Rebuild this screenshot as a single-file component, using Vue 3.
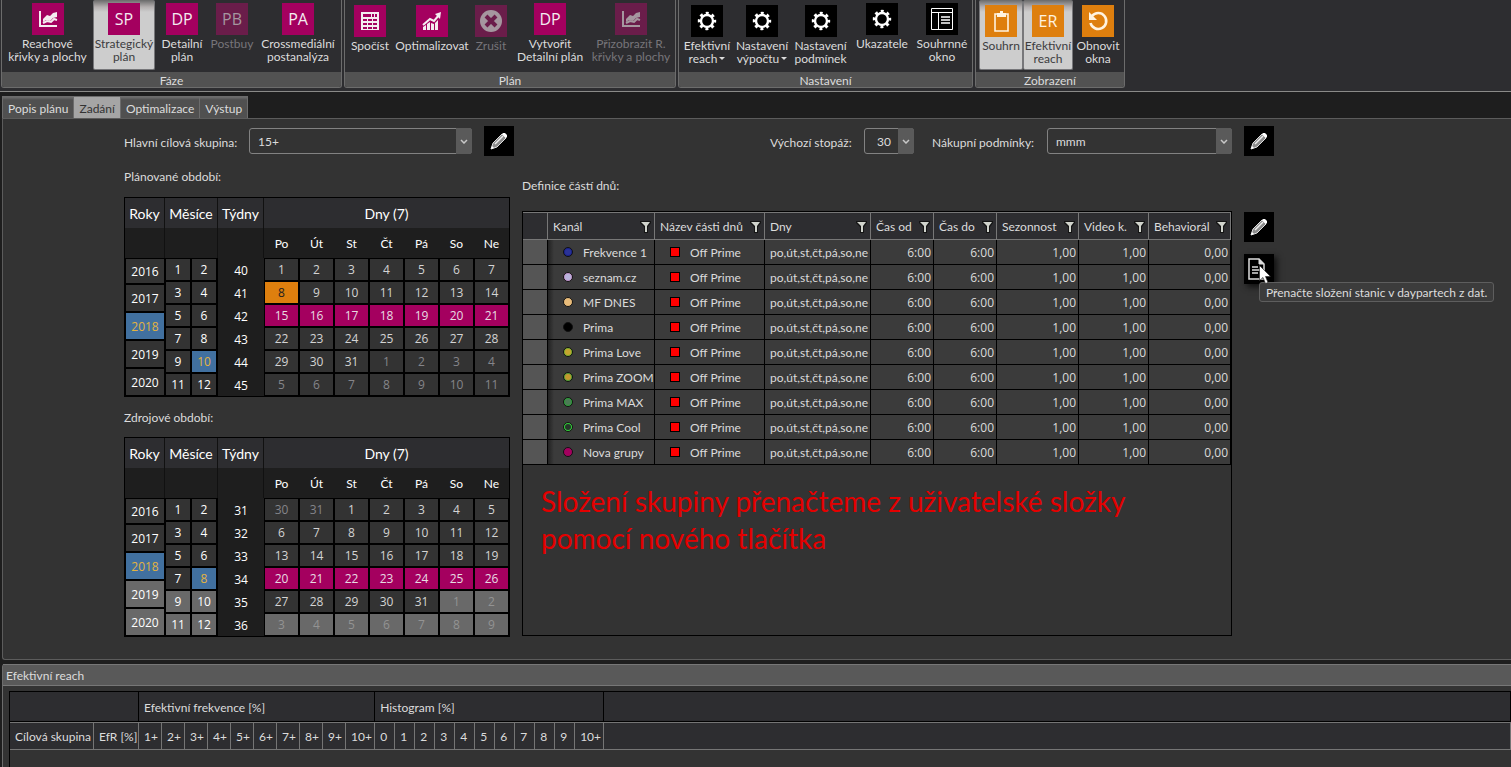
<script setup>
import { ref } from 'vue'

const groups = [
  {
    name: 'Fáze', key: 'faze',
    items: [
      { icon: 'chart', lines: ['Reachové', 'křivky a plochy'] },
      { glyph: 'SP', lines: ['Strategický', 'plán'], active: true },
      { glyph: 'DP', lines: ['Detailní', 'plán'] },
      { glyph: 'PB', lines: ['Postbuy'], disabled: true },
      { glyph: 'PA', lines: ['Crossmediální', 'postanalýza'] }
    ]
  },
  {
    name: 'Plán', key: 'plan',
    items: [
      { icon: 'calc', lines: ['Spočíst'], low: true },
      { icon: 'growth', lines: ['Optimalizovat'], low: true },
      { icon: 'cancel', lines: ['Zrušit'], low: true, disabled: true },
      { glyph: 'DP', lines: ['Vytvořit', 'Detailní plán'] },
      { icon: 'chart', lines: ['Přizobrazit R.', 'křivky a plochy'], disabled: true }
    ]
  },
  {
    name: 'Nastavení', key: 'nastaveni', tone: 'black',
    items: [
      { icon: 'gear', lines: ['Efektivní', 'reach'], low: true, menu: true },
      { icon: 'gear', lines: ['Nastavení', 'výpočtu'], low: true, menu: true },
      { icon: 'gear', lines: ['Nastavení', 'podmínek'], low: true },
      { icon: 'gear', lines: ['Ukazatele'] },
      { icon: 'window', lines: ['Souhrnné', 'okno'] }
    ]
  },
  {
    name: 'Zobrazení', key: 'zobrazeni', tone: 'orange',
    items: [
      { icon: 'clipboard', lines: ['Souhrn'], low: true, active: true },
      { glyph: 'ER', lines: ['Efektivní', 'reach'], low: true, active: true },
      { icon: 'reload', lines: ['Obnovit', 'okna'], low: true }
    ]
  }
]

const tabs = ['Popis plánu', 'Zadání', 'Optimalizace', 'Výstup']
const activeTab = ref('Zadání')

const weekdays = ['Po', 'Út', 'St', 'Čt', 'Pá', 'So', 'Ne']
const years = [2016, 2017, 2018, 2019, 2020]

function days(first, prevLast, length) {
  const out = []
  for (let i = 0; i < 42; i++) {
    const n = first + i
    if (n < 1) out.push({ n: prevLast + n, other: true })
    else if (n > length) out.push({ n: n - length, other: true })
    else out.push({ n, other: false })
  }
  return out
}

const calendars = [
  {
    title: 'Plánované období:', month: 10, weekStart: 40, lastYear: 2020, lastMonth: 12, lastDay: 42,
    days: days(1, 30, 31), today: 7, selected: [14, 20]
  },
  {
    title: 'Zdrojové období:', month: 8, weekStart: 31, lastYear: 2018, lastMonth: 8, lastDay: 33,
    days: days(-1, 31, 31), today: -1, selected: [21, 27]
  }
]

const columns = [
  { t: 'Kanál', k: 'kanal' }, { t: 'Název části dnů', k: 'nazev' }, { t: 'Dny', k: 'dny' },
  { t: 'Čas od', k: 'cas' }, { t: 'Čas do', k: 'cas' }, { t: 'Sezonnost', k: 'sezon' },
  { t: 'Video k.', k: 'video' }, { t: 'Behaviorál', k: 'behav' }
]

const channels = [
  { n: 'Frekvence 1', a: '#2b3398', b: '#1c2490' },
  { n: 'seznam.cz', a: '#b9b4dc', b: '#c49ad0' },
  { n: 'MF DNES', a: '#e8bb7a', b: '#e8bb7a' },
  { n: 'Prima', a: '#000', b: '#000' },
  { n: 'Prima Love', a: '#c4a52f', b: '#86b030' },
  { n: 'Prima ZOOM', a: '#c4982f', b: '#5da338' },
  { n: 'Prima MAX', a: '#4c7a55', b: '#2fa03c' },
  { n: 'Prima Cool', a: '#26352a', b: '#35d23c' },
  { n: 'Nova grupy', a: '#a4005f', b: '#a4005f' }
]

const freq = ['1+', '2+', '3+', '4+', '5+', '6+', '7+', '8+', '9+', '10+']
const hist = ['0', '1', '2', '3', '4', '5', '6', '7', '8', '9', '10+']
</script>

<template>
  <div class="app">
    <header class="ribbon">
      <section v-for="g in groups" :key="g.key" class="group" :class="['g-' + g.key, g.tone]">
        <div class="items">
          <button
            v-for="(b, i) in g.items" :key="i" type="button" class="rb"
            :class="{ active: b.active, low: b.low }" :disabled="b.disabled"
          >
            <span class="tile">
              <span v-if="b.glyph" class="glyph">{{ b.glyph }}</span>
              <svg v-else-if="b.icon === 'chart'" viewBox="0 0 32 32" aria-hidden="true">
                <path d="M8 8v15h17" fill="none" stroke="currentColor" stroke-width="2" />
                <path d="M11 16l4-4 3 1 3-3 4-1v5l-4 1-3 3-4-1-3 2z" fill="currentColor" />
                <path d="M11 20l4-2 4 1 3-3 3 1" fill="none" stroke="currentColor" stroke-width="2" />
              </svg>
              <svg v-else-if="b.icon === 'calc'" viewBox="0 0 32 32" aria-hidden="true">
                <path fill="currentColor" fill-rule="evenodd" d="M7 7h18v18H7zM9 9v3h14V9zM9 14v2h4v-2zM14 14v2h4v-2zM19 14v2h4v-2zM9 18v2h4v-2zM14 18v2h4v-2zM19 18v2h4v-2zM9 22v2h4v-2zM14 22v2h4v-2zM19 22v2h4v-2z" />
                <path d="M17.500 9v3M20.500 9v3" stroke="currentColor" />
              </svg>
              <svg v-else-if="b.icon === 'growth'" viewBox="0 0 32 32" aria-hidden="true">
                <path d="M7 22l3-2v5H7zM11 19l3-2v8h-3zM15 18l3 1v6h-3zM19 18l3-3v10h-3z" fill="currentColor" />
                <path d="M7 20l7-6 4 2 5-6" fill="none" stroke="currentColor" stroke-width="2" />
                <path d="M19 9l6-2-1 7z" fill="currentColor" />
              </svg>
              <svg v-else-if="b.icon === 'cancel'" viewBox="0 0 32 32" aria-hidden="true">
                <circle cx="16" cy="16" r="11" fill="currentColor" />
                <path d="M11 11l10 10M21 11L11 21" stroke="#6a1d4a" stroke-width="4" />
              </svg>
              <svg v-else-if="b.icon === 'gear'" viewBox="0 0 32 32" aria-hidden="true">
                <circle cx="16" cy="16" r="6" fill="none" stroke="currentColor" stroke-width="2.400" />
                <circle cx="16" cy="16" r="7.900" fill="none" stroke="currentColor" stroke-width="2.600" stroke-dasharray="3 3.204" stroke-dashoffset="1.500" />
              </svg>
              <svg v-else-if="b.icon === 'window'" viewBox="0 0 32 32" aria-hidden="true">
                <path d="M5.500 5.500h21v21h-21zM5.500 9.500h21M12.500 9.500v17" fill="none" stroke="currentColor" />
                <path d="M15 14h9M15 17h9M15 20h9" stroke="currentColor" stroke-width="1.600" />
              </svg>
              <svg v-else-if="b.icon === 'clipboard'" viewBox="0 0 32 32" aria-hidden="true">
                <path d="M10 9h13v17H10z" fill="none" stroke="currentColor" stroke-width="1.600" />
                <path d="M12 8h3V6h3v2h3v4h-9z" fill="currentColor" />
              </svg>
              <svg v-else viewBox="0 0 32 32" aria-hidden="true">
                <path d="M10 11a8 8 0 1 1-1.500 7" fill="none" stroke="currentColor" stroke-width="2.600" />
                <path d="M7 7v8h8z" fill="currentColor" />
              </svg>
            </span>
            <span v-for="(l, j) in b.lines" :key="l" class="line">{{ l }}<svg v-if="b.menu && j === 1" class="drop" viewBox="0 0 6 4" aria-hidden="true"><path d="M0 0h6L3 3z" fill="currentColor" /></svg></span>
          </button>
        </div>
        <h2>{{ g.name }}</h2>
      </section>
    </header>

    <nav class="tabs" role="tablist">
      <button
        v-for="t in tabs" :key="t" type="button" role="tab" class="tab"
        :class="{ on: t === activeTab }" :aria-selected="t === activeTab" @click="activeTab = t"
      >{{ t }}</button>
    </nav>

    <main class="panel">
      <div class="form">
        <label class="lab-main" for="target">Hlavní cílová skupina:</label>
        <span class="combo combo-target">
          <select id="target"><option>15+</option></select>
          <span class="arrow"><svg viewBox="0 0 8 5" aria-hidden="true"><path d="M1 1l3 3 3-3" /></svg></span>
        </span>
        <button type="button" class="ib" aria-label="Upravit skupinu">
          <svg viewBox="0 0 30 30" aria-hidden="true"><path class="pen" d="M7 23l2-6L18 8l4 4-9 9z" /><path class="pen-l" d="M11 18l8-8" /><path class="pen-t" d="M18 8l1-1h2l2 2v2l-1 1zM7 23l1-3 2 2z" /></svg>
        </button>
        <span class="spring"></span>
        <label class="lab-len" for="length">Výchozí stopáž:</label>
        <span class="combo combo-length">
          <select id="length"><option>30</option></select>
          <span class="arrow"><svg viewBox="0 0 8 5" aria-hidden="true"><path d="M1 1l3 3 3-3" /></svg></span>
        </span>
        <label class="lab-buy" for="terms">Nákupní podmínky:</label>
        <span class="combo combo-terms">
          <select id="terms"><option>mmm</option></select>
          <span class="arrow"><svg viewBox="0 0 8 5" aria-hidden="true"><path d="M1 1l3 3 3-3" /></svg></span>
        </span>
        <button type="button" class="ib" aria-label="Upravit podmínky">
          <svg viewBox="0 0 30 30" aria-hidden="true"><path class="pen" d="M7 23l2-6L18 8l4 4-9 9z" /><path class="pen-l" d="M11 18l8-8" /><path class="pen-t" d="M18 8l1-1h2l2 2v2l-1 1zM7 23l1-3 2 2z" /></svg>
        </button>
      </div>

      <div class="work">
        <div class="periods">
          <section v-for="c in calendars" :key="c.title" class="period">
            <h3>{{ c.title }}</h3>
            <div class="cal">
              <div class="col">
                <div class="ch">Roky</div><div class="cs"></div>
                <div class="years">
                  <button v-for="y in years" :key="y" type="button" class="cell" :class="{ sel: y === 2018, out: y > c.lastYear }">{{ y }}</button>
                </div>
              </div>
              <div class="col">
                <div class="ch">Měsíce</div><div class="cs"></div>
                <div class="months">
                  <button v-for="m in 12" :key="m" type="button" class="cell" :class="{ sel: m === c.month, out: m > c.lastMonth }">{{ m }}</button>
                </div>
              </div>
              <div class="col weeks-col">
                <div class="ch">Týdny</div><div class="cs"></div>
                <div class="weeks"><span v-for="w in 6" :key="w">{{ c.weekStart + w - 1 }}</span></div>
              </div>
              <div class="col">
                <div class="ch">Dny (7)</div>
                <div class="cs names"><span v-for="w in weekdays" :key="w">{{ w }}</span></div>
                <div class="days">
                  <button
                    v-for="(d, i) in c.days" :key="i" type="button" class="cell day"
                    :class="{ other: d.other, out: i >= c.lastDay, today: i === c.today, pick: i >= c.selected[0] && i <= c.selected[1] }"
                  >{{ d.n }}</button>
                </div>
              </div>
            </div>
          </section>
        </div>

        <section class="parts">
          <h3>Definice částí dnů:</h3>
          <div class="grid">
            <table class="dt">
              <thead>
                <tr>
                  <th class="k-row"></th>
                  <th v-for="c in columns" :key="c.t" :class="'k-' + c.k">
                    <span class="th"><span>{{ c.t }}</span><svg viewBox="0 0 12 12" aria-hidden="true"><path class="f-edge" d="M1 0h11v2L9 6v6H5V6L1 2z" /><path class="f-face" d="M2 1h9L8 5v6H6V5z" /></svg></span>
                  </th>
                </tr>
              </thead>
              <tbody>
                <tr v-for="c in channels" :key="c.n">
                  <td class="rowhead"></td>
                  <td class="chan"><svg viewBox="0 0 12 12" aria-hidden="true"><circle cx="6" cy="6" r="4.500" :fill="c.b" stroke="#111" /><circle cx="6" cy="6" r="3" :fill="c.a" /></svg>{{ c.n }}</td>
                  <td class="part"><i></i>Off Prime</td>
                  <td class="dny">po,út,st,čt,pá,so,ne</td>
                  <td class="num">6:00</td><td class="num">6:00</td>
                  <td class="num">1,00</td><td class="num">1,00</td><td class="num">0,00</td>
                </tr>
              </tbody>
            </table>
            <p class="note">Složení skupiny přenačteme z uživatelské složky<br>pomocí nového tlačítka</p>
          </div>
        </section>

        <div class="tools">
          <button type="button" class="ib" aria-label="Upravit části dnů">
            <svg viewBox="0 0 30 30" aria-hidden="true"><path class="pen" d="M7 23l2-6L18 8l4 4-9 9z" /><path class="pen-l" d="M11 18l8-8" /><path class="pen-t" d="M18 8l1-1h2l2 2v2l-1 1zM7 23l1-3 2 2z" /></svg>
          </button>
          <div class="hover">
            <button type="button" class="ib lit" aria-label="Přenačíst složení stanic">
              <svg viewBox="0 0 30 30" aria-hidden="true">
                <path d="M5 5h10l5 5v15H5z" fill="none" stroke="#ddd" stroke-width="1.500" />
                <path d="M15 5v5h5z" fill="#ddd" stroke="#ddd" />
                <path d="M8 13h6M8 16h8M8 19h6" stroke="#ddd" stroke-width="1.500" />
              </svg>
            </button>
            <div class="tip" role="tooltip">Přenačte složení stanic v daypartech z dat.</div>
            <svg class="cursor" viewBox="0 0 12 19" aria-hidden="true"><path d="M0.500 0.500v15l3.500-3 2.500 6 2.500-1-2.500-6h5z" fill="#fff" stroke="#222" stroke-width="0.600" /></svg>
          </div>
        </div>
      </div>
    </main>

    <section class="reach">
      <h2>Efektivní reach</h2>
      <div class="rbox">
        <table class="rt">
          <colgroup>
            <col class="w-name"><col class="w-efr">
            <col span="9" class="w-f"><col class="w-last">
            <col span="10" class="w-h"><col class="w-last"><col>
          </colgroup>
          <thead>
            <tr class="r1">
              <th colspan="2"></th>
              <th colspan="10">Efektivní frekvence [%]</th>
              <th colspan="11">Histogram [%]</th>
              <th></th>
            </tr>
            <tr class="r2">
              <th>Cílová skupina</th>
              <th>EfR [%]</th>
              <th v-for="f in freq" :key="'f' + f">{{ f }}</th>
              <th v-for="h in hist" :key="'h' + h">{{ h }}</th>
              <th></th>
            </tr>
          </thead>
        </table>
      </div>
    </section>
  </div>
</template>

<style>
html, body { background: #1e1e1e; overflow: hidden; }
</style>

<style scoped>
.app {
  min-height: 100vh; display: flex; flex-direction: column;
  font-family: Lato, "Open Sans", sans-serif; font-size: 12px; line-height: 16px;
  color: #dcdcdc; background: #1e1e1e;
}
* { box-sizing: border-box; }
button, select { font: inherit; color: inherit; margin: 0; padding: 0; border: 0; background: none; }
h2, h3, p { margin: 0; font-size: inherit; font-weight: 400; }
svg { display: block; }

.ribbon { display: flex; gap: 2px; height: 92px; padding: 0 1px 3px; background: #2d2d30; border-bottom: 1px solid #8a8a88; }
.group { border: 1px solid #6c6c6c; border-top: 0; border-radius: 0 0 3px 3px; overflow: hidden; }
.group h2 { height: 16px; line-height: 17px; text-align: center; background: #525252; }
.items { display: grid; height: 72px; }
.g-faze .items { grid-template-columns: 91px 62px 54px 46px 86px; }
.g-plan .items { grid-template-columns: 50px 74px 44px 74px 88px; }
.g-nastaveni .items { grid-template-columns: 56px 54px 63px 60px 60px; }
.g-zobrazeni .items { grid-template-columns: 44px 50px 50px; padding: 0 1px 0 3px; }
.rb { display: flex; flex-direction: column; align-items: center; height: 70px; padding-top: 3px; white-space: nowrap; border-radius: 2px; line-height: 13px; }
.rb.low { padding-top: 5px; }
.rb.active { color: #3c3c40; background: linear-gradient(#6a6a6a, #b5b0b0 7px, #cdcdcd 12px); border: 1px solid #77777a; border-top: 0; }
.tile { width: 32px; height: 32px; flex: none; margin-bottom: 2px; background: #a4005f; color: #f4ecf0; }
.black .tile { background: #000; color: #fff; }
.orange .tile { background: #de7f0e; color: #fff3e0; }
.rb:disabled { color: #77757a; }
.rb:disabled .tile { background: #6a1d4a; color: #a5979f; }
.glyph { display: block; font-family: "Open Sans", sans-serif; font-size: 16px; line-height: 32px; text-align: center; }
.line { display: flex; align-items: center; gap: 2px; }
.drop { width: 6px; height: 4px; }

.tabs { display: flex; height: 26px; padding: 4px 2px 0; }
.tab { height: 22px; padding: 2px 5px 0; line-height: 20px; background: linear-gradient(#6e6e6e, #505050 3px); border: 1px solid #6c6c6c; border-bottom: 0; border-left-width: 0; }
.tab:first-child { border-left-width: 1px; }
.tab.on { background: #a5a5a5; color: #333; }

.panel { margin-left: 2px; padding: 7px 237px 22px 121px; background: #333; border: 1px solid #5c5c5c; border-right: 0; border-radius: 0 0 0 3px; }
.form { display: flex; align-items: center; height: 30px; white-space: nowrap; }
.form label { padding-top: 4px; }
.lab-main { width: 125px; }
.lab-len { width: 94px; }
.lab-buy { width: 115px; margin-left: 18px; }
.combo { position: relative; height: 26px; }
.combo select { appearance: none; width: 100%; height: 26px; padding: 2px 8px 0; border: 1px solid #828282; border-radius: 3px; outline: 0; }
.combo-target { width: 223px; margin-right: 12px; }
.combo-length { width: 50px; }
.combo-length select { padding-left: 12px; }
.combo-terms { width: 185px; margin-right: 12px; }
.arrow { position: absolute; top: 0; right: 0; width: 16px; height: 26px; display: grid; place-items: center; background: #5a5a5a; border-radius: 0 3px 3px 0; pointer-events: none; }
.arrow svg { width: 8px; height: 5px; fill: none; stroke: #c8c8c8; stroke-width: 1.5; }
.spring { flex: 1; }
.ib { width: 30px; height: 30px; background: #000; flex: none; }
.pen { fill: #8c8c8c; stroke: #ddd; stroke-width: 1; }
.pen-l { stroke: #eee; stroke-width: 1.5; }
.pen-t { fill: #fff; }

.work { display: grid; grid-template-columns: 386px minmax(0, 1fr) 30px; column-gap: 12px; }
.period h3 { height: 40px; padding-top: 13px; }
.period:first-child h3 { height: 41px; }
.cal { display: grid; grid-template-columns: 40px 53px 46px minmax(0, 1fr); background: #000; border: 1px solid #000; color: #fff; }
.ch { height: 30px; line-height: 32px; font-size: 14px; text-align: center; background: #2d2d30; border-right: 1px solid #111; }
.cs { height: 30px; background: #1e1e1e; border-right: 1px solid #111; }
.col:last-child .ch, .col:last-child .cs { border-right: 0; }
.names { display: grid; grid-template-columns: repeat(7, 1fr); text-align: center; line-height: 31px; }
.years, .months, .weeks, .days, .num { font-family: "Open Sans", "Noto Sans", sans-serif; }
.years { display: grid; grid-template-rows: 26px repeat(4, 28px); }
.months { display: grid; grid-template-columns: 1fr 1fr; grid-auto-rows: 23px; padding-right: 1px; }
.days { display: grid; grid-template-columns: repeat(7, 1fr); grid-auto-rows: 23px; }
.weeks-col { background: #1e1e1e; }
.weeks { display: grid; grid-auto-rows: 23px; line-height: 25px; text-align: center; }
.cell { margin: 1px; background: #333; text-align: center; }
.years .cell { padding-top: 1px; }
.day { color: #d4d4d4; }
.other { color: #85858a; }
.out { background: #696969; }
.day.out { color: #939393; }
.sel { background: #41709f; color: #e3b341; }
.today { background: #de7f0e; color: #1e1e1e; }
.pick { background: #a4005f; color: #e8dce2; }

.parts h3 { height: 55px; padding-top: 22px; }
.grid { height: 425px; border: 1px solid #000; }
.dt { width: 100%; table-layout: fixed; border-collapse: separate; border-spacing: 0; }
.dt th { height: 28px; padding: 1px 3px 0 5px; font-weight: 400; text-align: left; background: #2d2d30; border: solid #777; border-width: 1px 1px 1px 0; white-space: nowrap; }
.th { display: flex; justify-content: space-between; align-items: center; }
.th svg { width: 12px; height: 12px; flex: none; }
.f-edge { fill: #141414; }
.f-face { fill: #d0d3cc; }
.k-row { width: 25px; }
.k-kanal { width: 107px; }
.k-nazev { width: 110px; }
.k-dny { width: 106px; }
.k-cas { width: 63px; }
.k-sezon { width: 82px; }
.k-video { width: 70px; }
.dt td { height: 25px; padding: 2px 0 0; background: #3b3b3b; border: solid #000; border-width: 0 1px 1px 0; white-space: nowrap; overflow: hidden; }
.dt td.rowhead { background: #555; }
.dt td.chan { padding-left: 14px; background: linear-gradient(90deg, #222, #3b3b3b 6px); }
.chan svg { display: inline-block; width: 12px; height: 12px; margin-right: 9px; vertical-align: -1px; }
.dt td.part { padding-left: 15px; }
.part i { display: inline-block; width: 10px; height: 10px; margin-right: 10px; background: #f00; border: 1px solid #000; }
.dt td.dny { padding-left: 5px; }
.dt td.num { padding-right: 2px; text-align: right; }
.note { padding: 18px 0 0 18px; font-size: 28px; line-height: 37px; color: #e40000; }

.tools { display: flex; flex-direction: column; gap: 12px; padding-top: 56px; }
.hover { position: relative; width: 30px; }
.lit { box-shadow: 3px 3px 6px #111; }
.tip { position: absolute; left: 15px; top: 28px; height: 20px; padding: 1px 6px 0; line-height: 18px; white-space: nowrap; background: #3c3c3c; border: 1px solid #5e5e5e; border-radius: 3px; }
.cursor { position: absolute; left: 15px; top: 11px; width: 12px; height: 19px; }

.reach { flex: 1; display: flex; flex-direction: column; margin: 4px 0 0 2px; background: #333; border-left: 1px solid #6c6c6c; border-radius: 3px 0 0 0; }
.reach h2 { height: 22px; padding-left: 3px; line-height: 22px; background: #595959; border: solid #777; border-width: 1px 0; }
.rbox { flex: 1; margin: 5px 0 0 6px; border: solid #000; border-width: 1px 0 0 1px; }
.rt { width: 100%; table-layout: fixed; border-collapse: separate; border-spacing: 0; }
.rt th { font-weight: 400; text-align: left; background: #2d2d30; padding: 2px 0 0 5px; white-space: nowrap; }
.r1 th { height: 30px; border: solid #000; border-width: 0 1px 1px 0; }
.r2 th { height: 28px; border: solid #757575; border-width: 1px 1px 1px 0; }
.w-name { width: 84px; }
.w-efr { width: 45px; }
.w-f { width: 23px; }
.w-last { width: 29px; }
.w-h { width: 20px; }
</style>
